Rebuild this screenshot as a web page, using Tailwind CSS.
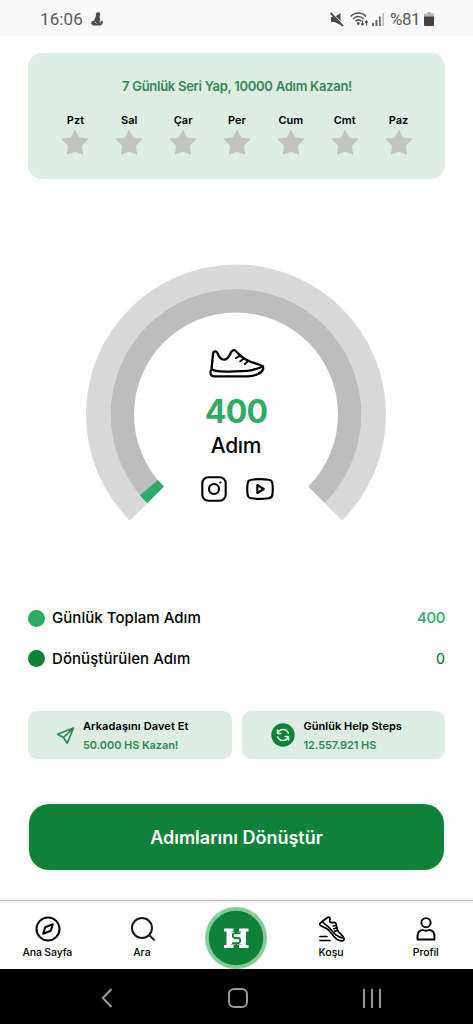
<!DOCTYPE html>
<html lang="tr">
<head>
<meta charset="utf-8">
<title>Help Steps</title>
<script src="https://cdn.jsdelivr.net/npm/@tailwindcss/browser@4"></script>
</head>
<body class="w-[473px] h-[1024px] overflow-hidden bg-white text-black font-['Inter','Noto_Sans',sans-serif] flex flex-col">
<header class="h-9 shrink-0 bg-[#f9f9f9] flex items-center justify-between pl-10 pr-[39px] text-[#5a5a5a] font-['Roboto',sans-serif]">
  <div class="flex items-center gap-2 pt-0.5">
    <span class="text-[17px] leading-5 tracking-[0.1px]">16:06</span>
    <svg class="w-3 h-[14px]" viewBox="0 0 12 14" fill="#4b4b4b"><circle cx="7" cy="2.400" r="2.200"/><path d="M5 4h3.600l.6 4.500 1.300.7.800-1.200.7 3-2.200 2.500H2.400L.2 12l.4-2.700 2.200-.3z"/><path d="M3.600 9.600l2 2M9 8l.3 3" stroke="#f9f9f9" stroke-width=".8"/></svg>
  </div>
  <div class="flex items-center pt-0.5">
    <svg class="w-[14px] h-[15px] mr-1.5" viewBox="0 0 14 15"><path d="M1 5h3.600L10.500 1v12L4.600 10H1z" fill="#4b4b4b"/><path d="M1.500 0L14 13.200" stroke="#f9f9f9" stroke-width="1"/><path d="M.5 1L13 14.200" stroke="#4b4b4b" stroke-width="1.900"/></svg>
    <svg class="w-[19px] h-[15px] mr-[3px]" viewBox="0 0 19 15" fill="none" stroke="#555" stroke-width="1.500"><path d="M.7 4.500C5-.2 11.800-.2 16 4.500M3 7c3.200-3.200 7.500-3.200 10.700 0M5.400 9.300c1.800-1.700 4.200-1.700 6 0"/><circle cx="8.300" cy="11.500" r=".7" fill="#555"/><path d="M12.500 8.500v4.500M11 11.500l1.500 1.500 1.500-1.500M16.500 13.500V9M15 10.500L16.500 9l1.500 1.500" stroke-width="1.200"/></svg>
    <svg class="w-[12px] h-[13px] mr-[6px]" viewBox="0 0 12 13"><path d="M0 10h2v3H0zM3.500 7h2v6h-2zM7 3.500h1.800V13H7z" fill="#6a6a6a"/><path d="M10.500 0H12v13h-1.500z" fill="#bbb"/></svg>
    <span class="text-[17px] leading-5 mr-[4px] tracking-[-0.5px]">%81</span>
    <svg class="w-[10px] h-[14px]" viewBox="0 0 10 14"><path d="M3 0h4v1.500h3V5H0V1.500h3z" fill="#b5b5b5"/><path d="M0 4.500h10V13a1 1 0 0 1-1 1H1a1 1 0 0 1-1-1z" fill="#444"/></svg>
  </div>
</header>

<main class="h-[864px] shrink-0 px-7 pt-[17px] flex flex-col">
  <section class="h-[126px] rounded-[14px] bg-[#ddede3] flex flex-col items-center pt-6">
    <h1 class="text-[13px] leading-[18px] font-semibold text-[#2f8a57] whitespace-nowrap tracking-[-0.27px] pl-px">7 Günlük Seri Yap, 10000 Adım Kazan!</h1>
    <div class="grid grid-cols-7 w-[377px] mt-[17px] ml-px text-[11px] leading-4 font-semibold">
      <div class="flex flex-col items-center"><span>Pzt</span><svg class="w-7 h-7 mt-px"><use href="#star"/></svg></div>
      <div class="flex flex-col items-center"><span>Sal</span><svg class="w-7 h-7 mt-px"><use href="#star"/></svg></div>
      <div class="flex flex-col items-center"><span>Çar</span><svg class="w-7 h-7 mt-px"><use href="#star"/></svg></div>
      <div class="flex flex-col items-center"><span>Per</span><svg class="w-7 h-7 mt-px"><use href="#star"/></svg></div>
      <div class="flex flex-col items-center"><span>Cum</span><svg class="w-7 h-7 mt-px"><use href="#star"/></svg></div>
      <div class="flex flex-col items-center"><span>Cmt</span><svg class="w-7 h-7 mt-px"><use href="#star"/></svg></div>
      <div class="flex flex-col items-center"><span>Paz</span><svg class="w-7 h-7 mt-px"><use href="#star"/></svg></div>
    </div>
  </section>

  <section class="mt-[85px] ml-[58px] w-[300px] h-[258px] grid">
    <svg class="col-start-1 row-start-1 w-[300px] h-[258px]" viewBox="0 -0.5 300 258">
      <path d="M43.930 256.070A150 150 0 1 1 256.070 256.070L238.750 238.750A125.500 125.500 0 1 0 61.250 238.750Z" fill="#d9d9d9"/>
      <path d="M61.260 238.740A125.500 125.500 0 1 1 238.740 238.740L222.120 222.120A102 102 0 1 0 77.880 222.120Z" fill="#bdbdbd"/>
      <path d="M61.260 238.740A125.500 125.500 0 0 1 53.900 230.700L71.900 215.600A102 102 0 0 0 77.880 222.120Z" fill="#2fab66"/>
    </svg>
    <div class="col-start-1 row-start-1 flex flex-col items-center pt-[84px]">
      <svg class="w-[56px] h-[31px] ml-px" viewBox="0 0 56 31" fill="none" stroke="#000" stroke-width="2.300" stroke-linecap="round" stroke-linejoin="round"><path d="M2.500 21.500L4 6c.3-3 3.500-3.500 4.500-.8 1.500 4 3.500 6.500 6.500 6.500 4.500 0 5.500-5 7.500-8 1.500-2.200 3.500-2 5 0C31 8 36 11.500 42 14l8 2.500c3.500 1 4.700 3 4 5-1.500 4-8 6.500-15 6.800H5.500c-2.500 0-4-1-4-3.500 0-2 .3-3 1-3.300zM2.500 21.500C8 24 17 23.800 25 23.300c9-.5 12 .3 18-1.200 5-1.200 8-2 11-4"/><path d="M31.500 7.500L27 10M35 10.500L31.200 13.200M39 13L36 16" stroke-width="2"/></svg>
      <div class="mt-[15px] text-[32px] leading-9 font-bold text-[#2fab66] tracking-[-0.8px]">400</div>
      <div class="mt-1 text-[21px] leading-6 font-medium tracking-[-0.3px]">Adım</div>
      <div class="mt-[18px] mr-[-2px] flex items-center gap-[19px]">
        <svg class="w-[26px] h-[26px]" viewBox="0 0 26 26" fill="none" stroke="#000" stroke-width="2.100"><rect x="1.300" y="1.300" width="23.400" height="23.400" rx="6"/><circle cx="13" cy="13" r="5"/><circle cx="19.300" cy="6.500" r="1.100" fill="#000" stroke="none"/></svg>
        <svg class="w-[28px] h-[22px]" viewBox="0 0 28 22" fill="none" stroke="#000" stroke-width="2.100" stroke-linejoin="round"><path d="M5.500 1.700Q14 .6 22.500 1.700Q26 2 26.400 5.500Q27.100 11 26.400 16.500Q26 20 22.500 20.300Q14 21.400 5.500 20.300Q2 20 1.600 16.500Q.9 11 1.600 5.500Q2 2 5.500 1.700Z"/><path d="M11.300 7v8l6.500-4z"/></svg>
      </div>
    </div>
  </section>

  <section class="mt-[84px] flex flex-col gap-[15px] text-[15px] leading-6 font-medium">
    <div class="flex items-center"><span class="w-[17px] h-[17px] rounded-full bg-[#2fab66] mr-[7px]"></span><span class="tracking-[0.05px]">Günlük Toplam Adım</span><span class="ml-auto tracking-[-0.4px] text-[#2fab66]">400</span></div>
    <div class="flex items-center"><span class="w-[17px] h-[17px] rounded-full bg-[#0f8238] mr-[7px]"></span><span class="tracking-[0.05px] pt-0.5">Dönüştürülen Adım</span><span class="ml-auto text-[14px] text-[#0f8238] pt-0.5">0</span></div>
  </section>

  <section class="mt-[40px] grid grid-cols-2 gap-[10px] text-[11px] leading-[19px] font-semibold whitespace-nowrap">
    <div class="h-[48px] rounded-[9px] bg-[#ddede3] flex items-center pl-7">
      <svg class="w-[19px] h-[19px] mr-2" viewBox="0 0 19 19" fill="none" stroke="#2f8a57" stroke-width="1.700" stroke-linejoin="round"><path d="M17.500 2L1.500 8.200l6 3.300 3.700 5.800zM17.500 2l-10 9.500M17.500 2L7.800 11"/></svg>
      <div class="flex flex-col pt-px"><span class="tracking-[0.1px]">Arkadaşını Davet Et</span><span class="text-[#2f8a57] tracking-[-0.08px]">50.000 HS Kazan!</span></div>
    </div>
    <div class="h-[48px] rounded-[9px] bg-[#ddede3] flex items-center pl-[29px]">
      <svg class="w-6 h-6 mr-[9px]" viewBox="0 0 24 24" fill="none" stroke="#e8f5ec" stroke-width="1.600" stroke-linecap="round" stroke-linejoin="round"><circle cx="12" cy="12" r="11.700" fill="#0f8238" stroke="none"/><path d="M6.500 7v3.500H10M17.500 17v-3.500H14M6.800 10.300A5.600 5.600 0 0 1 17.300 10M17.200 13.700A5.600 5.600 0 0 1 6.700 14"/></svg>
      <div class="flex flex-col pt-px"><span class="tracking-[0.03px]">Günlük Help Steps</span><span class="text-[#2f8a57] tracking-[-0.08px]">12.557.921 HS</span></div>
    </div>
  </section>

  <button class="mt-[45px] ml-px mr-px h-[66px] shrink-0 rounded-[20px] bg-[#0f8238] text-white text-[18px] leading-6 font-semibold pt-0.5">Adımlarını Dönüştür</button>
</main>

<nav class="h-[69px] shrink-0 border-t border-[#bdbdbd] bg-white grid grid-cols-5 text-[10.500px] leading-[14px] font-medium">
  <div class="flex flex-col items-center pt-[15px] gap-[4px]">
    <svg class="w-[26px] h-[26px] ml-px" viewBox="0 0 26 26" fill="none" stroke="#000" stroke-width="2" stroke-linejoin="round"><circle cx="13" cy="13" r="11.500"/><path d="M17.800 8.200l-2 6.500-7.600 3.100 2-6.500z"/></svg><span class="tracking-[-0.15px]">Ana Sayfa</span></div>
  <div class="flex flex-col items-center pt-[15px] gap-[4px]">
    <svg class="w-[26px] h-[26px] ml-0.5" viewBox="0 0 26 26" fill="none" stroke="#1a1a1a" stroke-width="2" stroke-linecap="round"><circle cx="12" cy="12" r="10"/><path d="M19.300 19.300l4.700 4.500"/></svg><span>Ara</span></div>
  <div class="flex justify-center pt-[6px]">
    <svg class="w-[62px] h-[62px]" viewBox="0 0 62 62"><circle cx="31" cy="31" r="31" fill="#85cb9c"/><circle cx="31" cy="31" r="27.200" fill="#0f8238"/><path d="M19 21.500h9.500v3H26V38h2.500v3H19v-3h2.500V24.500H19zM34 21.500h9.500v3H41V38h2.500v3H34v-3h2.500V24.500H34zM26 25h10.500v12.500H26z" fill="#fff"/><path d="M35.600 26.200H30q-2.200 0-2.200 2.300t2.200 2.500h3q2.200 0 2.200 2.500T33 36.200h-6M31.300 23.500v2.500M31.300 36.200v2.700" fill="none" stroke="#0f8238" stroke-width="1.800"/></svg></div>
  <div class="flex flex-col items-center pt-[15px] gap-[4px]">
    <svg class="w-[26px] h-[26px] ml-0.5" viewBox="0 0 26 26" fill="none" stroke="#000" stroke-width="1.700" stroke-linecap="round" stroke-linejoin="round"><path d="M1 7.500L5 4l4.500-3c1.600.4 1.700 1.600 1.300 3-.4 2 .7 3 2.400 2.600 1.800-.5 3.300-.6 3.800 1l1.300 6c.6 3 5.700 5.500 6.700 8.700.4 1.700-.5 2.700-2.300 2.600-3.500-.3-6.500-2.700-8.500-5.500L8.500 13 1.300 9.500Q.3 8.500 1 7.500zM3.500 5.500c1 2.500 5 4 7.500 7 3.500 4.200 6.500 8.500 13.500 9.800"/><path d="M17.200 9.200L14.200 10M17.800 11.800l-3 .9M18.400 14.300l-2.700 1.100M1 20.500h7M1 24.500h10"/></svg><span>Koşu</span></div>
  <div class="flex flex-col items-center pt-[15px] gap-[4px]">
    <svg class="w-[26px] h-[26px] ml-px" viewBox="0 0 26 26" fill="none" stroke="#000" stroke-width="1.900" stroke-linejoin="round"><circle cx="13" cy="6.700" r="4.600"/><path d="M4.500 23.500c-.6-6.500 1.500-9.500 5.300-9.500q3.200 1.400 6.400 0c3.800 0 5.900 3 5.300 9.500z"/></svg><span class="tracking-[-0.1px]">Profil</span></div>
</nav>
<footer class="h-[55px] shrink-0 bg-black flex items-center justify-between pl-[101px] pr-[92px] pt-[3px]">
  <svg class="w-3 h-5" viewBox="0 0 12 20" fill="none" stroke="#999" stroke-width="2"><path d="M10.500 1L1.800 10l8.700 9"/></svg>
  <svg class="w-5 h-5" viewBox="0 0 20 20" fill="none" stroke="#999" stroke-width="2"><rect x="1" y="1" width="18" height="18" rx="5"/></svg>
  <svg class="w-[18px] h-[19px]" viewBox="0 0 18 19" stroke="#999" stroke-width="2"><path d="M1 0v19M9 0v19M17 0v19"/></svg>
</footer>
<svg class="hidden"><symbol id="star" viewBox="0 0 28 28"><path d="M14 2l3.600 7.200 8.800 1-6.400 6.300 1.500 8.300L14 21.700l-7.500 3.100L8 16.500 1.600 10.200l8.800-1z" fill="#c3c3c3" stroke="#c3c3c3" stroke-width="1.500" stroke-linejoin="round"/></symbol></svg>
</body>
</html>
